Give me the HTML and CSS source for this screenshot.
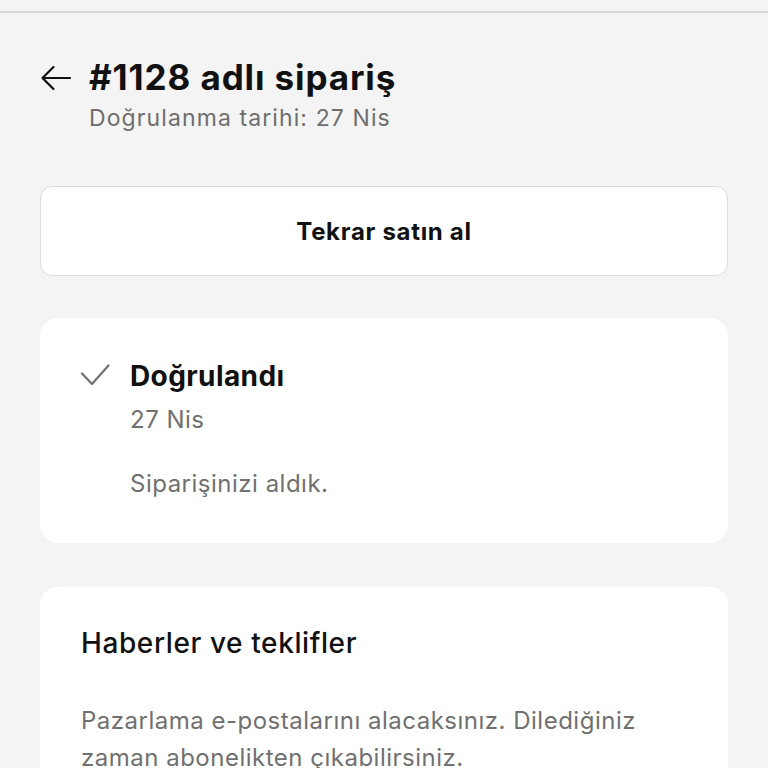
FILE: index.html
```html
<!DOCTYPE html>
<html lang="tr">
<head>
<meta charset="utf-8">
<link rel="stylesheet" href="styles.css">
</head>
<body>
<div class="topbar"></div>
<main class="page">
  <header class="head">
    <svg class="back" width="32" height="26" viewBox="0 0 32 26" fill="none" stroke="#111" stroke-width="2.2" stroke-linecap="round" stroke-linejoin="round"><path d="M30 13H2.5M13.5 2L2.5 13L13.5 24"/></svg>
    <div class="head-text">
      <h1 class="title">#1128 adlı sipariş</h1>
      <p class="sub">Doğrulanma tarihi: 27 Nis</p>
    </div>
  </header>
  <button class="btn">Tekrar satın al</button>
  <section class="card status">
    <svg class="check" width="30" height="22" viewBox="0 0 30 22" fill="none" stroke="#707070" stroke-width="2.2" stroke-linecap="round" stroke-linejoin="round"><path d="M2 9.5L12 20L28.5 1.5"/></svg>
    <div class="status-text">
      <h2 class="status-title">Doğrulandı</h2>
      <p class="muted date">27 Nis</p>
      <p class="muted">Siparişinizi aldık.</p>
    </div>
  </section>
  <section class="card news">
    <h2 class="news-title">Haberler ve teklifler</h2>
    <p class="muted para">Pazarlama e-postalarını alacaksınız. Dilediğiniz zaman abonelikten çıkabilirsiniz.</p>
  </section>
</main>
</body>
</html>
```
FILE: styles.css
```css
html, body {
  margin: 0;
  padding: 0;
  background: #f4f4f4;
  font-family: Inter, Roboto, "Liberation Sans", sans-serif;
  color: #111;
  height: 768px;
  overflow: hidden;
}
.topbar {
  height: 11px;
  border-bottom: 2px solid #d6d6d6;
}
.page {
  padding: 0 40px;
  display: flex;
  flex-direction: column;
}
.head {
  display: flex;
  align-items: flex-start;
  gap: 17px;
  margin-top: 43px;
}
.back {
  margin-top: 9px;
  flex: none;
}
.title {
  margin: 0;
  font-size: 35px;
  font-weight: 700;
  line-height: 42px;
  letter-spacing: 0.9px;
}
.sub {
  margin: 5px 0 0;
  font-size: 23px;
  line-height: 30px;
  color: #6e6e6e;
  letter-spacing: 1.1px;
}
.btn {
  margin-top: 53px;
  height: 90px;
  background: #fff;
  border: 1px solid #dcdcdc;
  border-radius: 12px;
  font-family: inherit;
  font-size: 24px;
  font-weight: 700;
  color: #111;
  letter-spacing: 0.7px;
}
.card {
  background: #fff;
  border-radius: 18px;
}
.status {
  margin-top: 42px;
  height: 225px;
  box-sizing: border-box;
  display: flex;
  gap: 20px;
  padding: 40px 40px 0 40px;
}
.check {
  margin-top: 6px;
  flex: none;
}
.status-title {
  margin: 0;
  font-size: 28px;
  font-weight: 700;
  line-height: 36px;
  letter-spacing: 0.4px;
}
.muted {
  margin: 0;
  color: #707070;
  font-size: 24px;
  line-height: 32px;
  letter-spacing: 0.5px;
}
.date {
  margin-top: 10px;
  margin-bottom: 32px;
}
.news {
  margin-top: 44px;
  padding: 38px 40px 40px 41px;
}
.news-title {
  margin: 0;
  font-size: 28px;
  font-weight: 500;
  line-height: 36px;
  letter-spacing: 0.6px;
}
.para {
  margin-top: 41px;
  line-height: 37px;
}
```
